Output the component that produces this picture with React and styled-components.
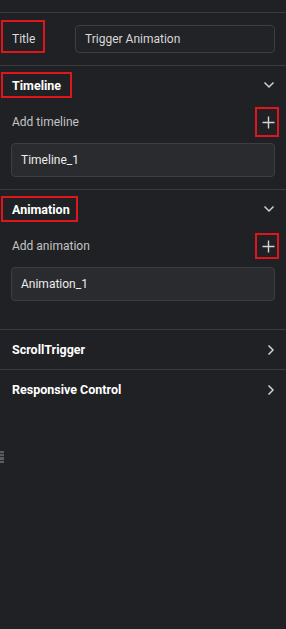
import React from 'react';
import styled, { createGlobalStyle } from 'styled-components';

const GlobalStyle = createGlobalStyle`
  html, body {
    margin: 0;
    background: #202124;
  }
  body {
    font-family: Roboto, "Liberation Sans", sans-serif;
    font-size: 12px;
    color: #d6d6d6;
  }
`;

const Panel = styled.div`
  position: relative;
  width: 286px;
  min-height: 629px;
  padding-top: 12px;
  box-sizing: border-box;
  background: #202124;
`;

const Row = styled.div`
  display: flex;
  align-items: center;
  justify-content: space-between;
  box-sizing: border-box;
  height: ${(p) => p.h}px;
  padding: 0 11px 0 12px;
`;

const Section = styled.div`
  border-top: 1px solid #3a3b3e;
  padding-bottom: ${(p) => p.pb || 0}px;
`;

const Marked = styled.span`
  position: relative;
  display: inline-flex;
  &::after {
    content: '';
    position: absolute;
    left: ${(p) => p.l}px;
    right: ${(p) => p.r}px;
    top: ${(p) => p.t}px;
    bottom: ${(p) => p.b}px;
    border: 2px solid #e0161c;
    pointer-events: none;
  }
`;

const Label = styled.span`
  width: 63px;
  flex-shrink: 0;
  color: #dcdcdc;
`;

const Heading = styled.span`
  font-weight: 700;
  color: #ffffff;
  font-size: 12.5px;
`;

const Muted = styled.span`
  color: #c4c4c4;
`;

const Field = styled.div`
  flex: 1;
  display: flex;
  align-items: center;
  box-sizing: border-box;
  height: ${(p) => p.h}px;
  border: 1px solid #3d3e42;
  border-radius: 4px;
  background: ${(p) => p.bg || '#222326'};
  padding-left: ${(p) => p.pl}px;
  color: ${(p) => p.color || '#d4d4d4'};
`;

const FieldWrap = styled.div`
  padding: 0 11px;
  margin-top: 3px;
  display: flex;
`;

const IconBtn = styled.span`
  display: flex;
  width: 16px;
  height: 16px;
  align-items: center;
  justify-content: center;
  margin-right: -1px;
`;

const Handle = styled.div`
  position: absolute;
  left: 0;
  top: 451px;
  width: 4px;
  height: 12px;
  background: #5a5c60;
  display: flex;
  flex-direction: column;
  justify-content: space-around;
  padding: 1px 0;
  box-sizing: border-box;
  & > i {
    display: block;
    height: 1px;
    background: #2a2b2e;
  }
`;

const ChevronDown = () => (
  <svg width="12" height="8" viewBox="0 0 12 8" fill="none">
    <path d="M1.5 1.5 L6 6 L10.5 1.5" stroke="#cfcfcf" strokeWidth="1.5" />
  </svg>
);

const ChevronRight = () => (
  <svg width="8" height="12" viewBox="0 0 8 12" fill="none">
    <path d="M1.5 1.5 L6 6 L1.5 10.5" stroke="#cfcfcf" strokeWidth="1.5" />
  </svg>
);

const Plus = () => (
  <svg width="13" height="13" viewBox="0 0 13 13" fill="none">
    <path d="M6.5 0.5 V12.5 M0.5 6.5 H12.5" stroke="#d4d4d4" strokeWidth="1.4" />
  </svg>
);

const App = () => {
  return (
    <Panel>
      <GlobalStyle />
      <Section>
        <Row h={52}>
          <Label>
            <Marked l={-11} r={-10} t={-12} b={-7}>Title</Marked>
          </Label>
          <Field h={28} pl={9} color="#d8d8d8">Trigger Animation</Field>
        </Row>
      </Section>

      <Section pb={12}>
        <Row h={38}>
          <Marked l={-11} r={-11} t={-6} b={-5}>
            <Heading>Timeline</Heading>
          </Marked>
          <ChevronDown />
        </Row>
        <Row h={36}>
          <Muted>Add timeline</Muted>
          <Marked l={-5} r={-4} t={-7} b={-7}>
            <IconBtn><Plus /></IconBtn>
          </Marked>
        </Row>
        <FieldWrap>
          <Field h={34} pl={9} bg="#2a2b2e" color="#ececec">Timeline_1</Field>
        </FieldWrap>
      </Section>

      <Section pb={28}>
        <Row h={38}>
          <Marked l={-11} r={-8} t={-6} b={-5}>
            <Heading>Animation</Heading>
          </Marked>
          <ChevronDown />
        </Row>
        <Row h={36}>
          <Muted>Add animation</Muted>
          <Marked l={-5} r={-4} t={-5} b={-5}>
            <IconBtn><Plus /></IconBtn>
          </Marked>
        </Row>
        <FieldWrap>
          <Field h={34} pl={9} bg="#2a2b2e" color="#ececec">Animation_1</Field>
        </FieldWrap>
      </Section>

      <Section>
        <Row h={39}>
          <Heading>ScrollTrigger</Heading>
          <ChevronRight />
        </Row>
      </Section>
      <Section>
        <Row h={39}>
          <Heading>Responsive Control</Heading>
          <ChevronRight />
        </Row>
      </Section>

      <Handle><i /><i /><i /></Handle>
    </Panel>
  );
};

export default App;
